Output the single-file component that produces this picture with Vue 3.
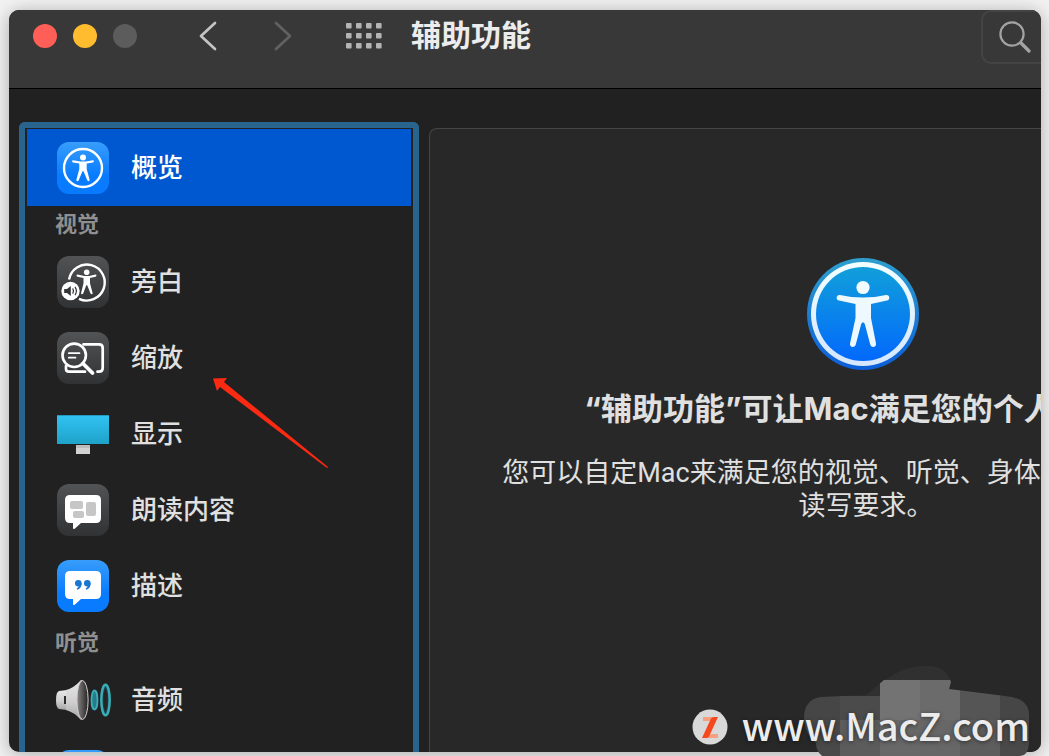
<script setup>
import { ref } from 'vue'

const current = ref('overview')

const groups = [
  { title: '', items: [{ id: 'overview', label: '概览' }] },
  {
    title: '视觉',
    items: [
      { id: 'voiceover', label: '旁白' },
      { id: 'zoom', label: '缩放' },
      { id: 'display', label: '显示' },
      { id: 'spoken', label: '朗读内容' },
      { id: 'descriptions', label: '描述' },
    ],
  },
  {
    title: '听觉',
    items: [
      { id: 'audio', label: '音频' },
      { id: 'next', label: '' },
    ],
  },
]

const dots = Array.from({ length: 12 }, (_, i) => ({ x: (i % 4) * 10, y: Math.floor(i / 4) * 10 }))

const mosaic = [
  { x: 0, y: 0, w: 226, h: 32, fill: '#303030' },
  { x: 0, y: 32, w: 36, h: 24, fill: '#464646' },
  { x: 36, y: 32, w: 40, h: 24, fill: '#4b4b4b' },
  { x: 76, y: 16, w: 40, h: 40, fill: '#737373' },
  { x: 116, y: 16, w: 40, h: 40, fill: '#6b6b6b' },
  { x: 156, y: 16, w: 40, h: 40, fill: '#555555' },
  { x: 196, y: 16, w: 30, h: 40, fill: '#464646' },
  { x: 0, y: 56, w: 36, h: 36, fill: '#494949' },
  { x: 36, y: 56, w: 40, h: 36, fill: '#5c5c5c' },
  { x: 76, y: 56, w: 40, h: 36, fill: '#686868' },
  { x: 116, y: 56, w: 40, h: 36, fill: '#676767' },
  { x: 156, y: 56, w: 40, h: 36, fill: '#5d5d5d' },
  { x: 196, y: 56, w: 30, h: 36, fill: '#494949' },
]
</script>

<template>
  <div class="desktop">
    <div class="window">
      <header class="titlebar">
        <div class="lights">
          <button class="light close" aria-label="关闭"></button>
          <button class="light minimize" aria-label="最小化"></button>
          <button class="light full" aria-label="缩放窗口" disabled></button>
        </div>
        <button class="tool back" aria-label="后退">
          <svg width="18" height="30" viewBox="0 0 18 30"><path d="M16 2 2 15 16 28" fill="none" stroke="#c4c4c4" stroke-width="2.7" stroke-linecap="round" stroke-linejoin="round" /></svg>
        </button>
        <button class="tool forward" aria-label="前进" disabled>
          <svg width="18" height="30" viewBox="0 0 18 30"><path d="M2 2 16 15 2 28" fill="none" stroke="#616161" stroke-width="2.7" stroke-linecap="round" stroke-linejoin="round" /></svg>
        </button>
        <button class="tool grid" aria-label="显示全部">
          <svg width="36" height="26" viewBox="0 0 36 26"><rect v-for="(d, i) in dots" :key="i" :x="d.x" :y="d.y" width="5.6" height="5.4" rx="1" fill="#b4b4b4" /></svg>
        </button>
        <h1 class="title">辅助功能</h1>
        <div class="search-slot">
          <label class="search">
            <svg width="34" height="34" viewBox="0 0 34 34"><circle cx="14" cy="14" r="11.6" fill="none" stroke="#a3a3a3" stroke-width="2.2" /><path d="m23 23 8 8" stroke="#a3a3a3" stroke-width="3.4" stroke-linecap="round" /></svg>
            <input type="search" aria-label="搜索" />
          </label>
        </div>
      </header>

      <div class="body">
        <nav class="sidebar">
          <section v-for="g in groups" :key="g.title" class="group">
            <h2 v-if="g.title" class="group-title">{{ g.title }}</h2>
            <button v-for="item in g.items" :key="item.id" class="row" :class="{ active: current === item.id }" @click="current = item.id">
              <svg class="icon" width="60" height="56" viewBox="-2 -2 60 56" aria-hidden="true">
                <defs>
                  <linearGradient :id="'blue-' + item.id" x1="0" y1="0" x2="0" y2="1"><stop offset="0" stop-color="#389dfb" /><stop offset=".65" stop-color="#087cff" /><stop offset="1" stop-color="#087aff" /></linearGradient>
                  <linearGradient :id="'gray-' + item.id" x1="0" y1="0" x2="0" y2="1"><stop offset="0" stop-color="#525355" /><stop offset="1" stop-color="#313234" /></linearGradient>
                </defs>
                <g v-if="item.id === 'overview'">
                  <rect width="52" height="52" rx="12" fill="url(#blue-overview)" />
                  <circle cx="26" cy="26" r="19" fill="none" stroke="#fff" stroke-width="2.4" />
                  <circle cx="26" cy="15.5" r="3" fill="#fff" />
                  <path d="M16 18.2 23.5 19.6H28.5L36 18.2C37.2 18.2 37.2 20.2 36 20.4L29.7 21.6V27L32.6 37.8C32.8 39.3 31 39.6 30.4 38.4L26.5 29.2H25.5L21.6 38.4C21 39.6 19.2 39.3 19.4 37.8L22.3 27V21.6L16 20.4C14.8 20.2 14.8 18.2 16 18.2Z" fill="#fff" />
                </g>
                <g v-else-if="item.id === 'voiceover'">
                  <rect width="52" height="52" rx="12" fill="url(#gray-voiceover)" />
                  <path d="M12 23.5A18 18 0 1 1 22 42.8" fill="none" stroke="#fff" stroke-width="2.4" />
                  <circle cx="29.7" cy="16.2" r="2.8" fill="#fff" />
                  <path d="M20.5 18.6 27.5 20H32L38.5 18.6C39.8 18.6 39.8 20.6 38.5 20.8L33 22V27.3L35.6 37C35.7 38.5 34.1 38.7 33.5 37.6L30.2 29.3H29.3L26.2 37.6C25.5 38.8 23.9 38.4 24.1 37L26.5 27.3V22L20.5 20.8C19.2 20.6 19.2 18.6 20.5 18.6Z" fill="#fff" />
                  <circle cx="13.5" cy="35" r="9.2" fill="#fff" />
                  <path d="M7.2 33H10L13.8 30V40L10 37H7.2Z" fill="#343537" />
                  <path d="M15.7 32.4Q17.3 35 15.7 37.6M18 30.8Q20.8 35 18 39.2" fill="none" stroke="#343537" stroke-width="1.2" />
                </g>
                <g v-else-if="item.id === 'zoom'">
                  <rect width="52" height="52" rx="12" fill="url(#gray-zoom)" />
                  <g fill="none" stroke="#fff" stroke-linecap="round">
                    <path d="M26.5 12.3H42Q45.7 12.3 45.7 16V36Q45.7 39.7 42 39.7H40.5M9 34V37Q9 39.7 12 39.7H28" stroke-width="2.7" />
                    <circle cx="17.2" cy="23.3" r="11.7" stroke-width="2.6" />
                    <path d="m26 31.5 9.5 9.5" stroke-width="3.8" />
                    <path d="M11.8 21.2H22.5M11.8 25.7H18.5" stroke-width="1.7" />
                  </g>
                </g>
                <g v-else-if="item.id === 'display'">
                  <linearGradient id="screen" x1="0" y1="0" x2="0" y2="1"><stop offset="0" stop-color="#32c3f4" /><stop offset="1" stop-color="#1ea2c8" /></linearGradient>
                  <rect y="7" width="52" height="29" fill="url(#screen)" />
                  <rect y="7" width="52" height="1" fill="#2598bd" />
                  <rect x="19" y="37" width="14" height="9" fill="#d2d2d2" />
                  <rect x="19" y="37" width="14" height="3" fill="#bcbcbc" />
                </g>
                <g v-else-if="item.id === 'spoken'">
                  <rect width="52" height="52" rx="12" fill="url(#gray-spoken)" />
                  <path d="M13 11H39Q44 11 44 16V34Q44 39 39 39H24L18 44.5Q16 46 16 43.5V39H13Q8 39 8 34V16Q8 11 13 11Z" fill="#fff" />
                  <rect x="13" y="17" width="13" height="8" rx="2" fill="#c6c6c6" />
                  <rect x="29" y="18" width="10" height="14" rx="2" fill="#c6c6c6" />
                  <rect x="16" y="27" width="11" height="7" rx="2" fill="#c6c6c6" />
                </g>
                <g v-else-if="item.id === 'descriptions'">
                  <rect width="52" height="52" rx="12" fill="url(#blue-descriptions)" />
                  <path d="M13 11H39Q44 11 44 16V34Q44 39 39 39H24L18 44.5Q16 46 16 43.5V39H13Q8 39 8 34V16Q8 11 13 11Z" fill="#fff" />
                  <g fill="#1877d2"><circle cx="21.3" cy="23.3" r="3.3" /><path d="M24.6 23Q25 28 20.3 29.8L19.6 28.7Q22 27.3 22 25Z" /><circle cx="30.3" cy="23.3" r="3.3" /><path d="M33.6 23Q34 28 29.3 29.8L28.6 28.7Q31 27.3 31 25Z" /></g>
                </g>
                <g v-else-if="item.id === 'audio'">
                  <linearGradient id="horn" x1="0" y1="0" x2="0" y2="1"><stop offset="0" stop-color="#e8e8e8" /><stop offset=".55" stop-color="#cfcfcf" /><stop offset="1" stop-color="#a5a5a5" /></linearGradient>
                  <linearGradient id="cone" x1="0" y1="0" x2="1" y2="0"><stop offset="0" stop-color="#8a8787" /><stop offset="1" stop-color="#242222" /></linearGradient>
                  <path d="M2 17Q-1 18-1 26T2 35L10 36V16Z" fill="url(#horn)" />
                  <path d="M7 22H11V30H7Z" fill="#2c2c2c" />
                  <path d="M9 16Q17 14 24 6Q30 7 30 26T24 46Q17 38 9 36Z" fill="url(#horn)" />
                  <ellipse cx="25.5" cy="26" rx="5.6" ry="19.5" fill="url(#cone)" stroke="#d8cfcf" stroke-width="1" />
                  <ellipse cx="37.5" cy="26" rx="3" ry="9.5" fill="#247c89" stroke="#3badb9" stroke-width="1.8" />
                  <ellipse cx="48.5" cy="26" rx="4.2" ry="15.3" fill="#17454c" stroke="#3badb9" stroke-width="2.5" />
                  <ellipse cx="48.5" cy="26" rx="2" ry="11" fill="#252525" />
                </g>
                <rect v-else width="52" height="52" rx="12" fill="url(#blue-next)" />
              </svg>
              <span class="label">{{ item.label }}</span>
            </button>
          </section>
        </nav>

        <main class="panel">
          <svg class="hero" width="112" height="112" viewBox="0 0 112 112" aria-hidden="true">
            <defs>
              <linearGradient id="rim" x1="0" y1="0" x2="0" y2="1"><stop offset="0" stop-color="#2d9fce" /><stop offset="1" stop-color="#0c5ed8" /></linearGradient>
              <linearGradient id="disc" x1="0" y1="0" x2="0" y2="1"><stop offset="0" stop-color="#119fda" /><stop offset="1" stop-color="#0269fc" /></linearGradient>
              <linearGradient id="ring" x1="0" y1="0" x2="0" y2="1"><stop offset="0" stop-color="#f3ffff" /><stop offset="1" stop-color="#d5e6ff" /></linearGradient>
            </defs>
            <circle cx="56" cy="56" r="56" fill="url(#rim)" />
            <circle cx="56" cy="56" r="52" fill="url(#ring)" />
            <circle cx="56" cy="56" r="47" fill="url(#disc)" />
            <circle cx="56" cy="29.5" r="6.6" fill="#f2fbff" />
            <path d="M33 37Q44 39.5 56 39.5T79 37C83 36.5 83.4 41.8 80 42.6L64 46V60L69 85.5C69.6 89.5 64.6 90.2 63.3 86.8L57.8 66Q56 62.5 54.2 66L48.7 86.8C47.4 90.2 42.4 89.5 43 85.5L48.5 60V46L32 42.6C28.6 41.8 29 36.5 33 37Z" fill="#eef8ff" />
          </svg>
          <div class="intro">
            <h2 class="headline">“辅助功能”可让Mac满足您的个人需求。</h2>
            <p class="copy">您可以自定Mac来满足您的视觉、听觉、身体活动、学习以及<br />读写要求。</p>
          </div>
        </main>
      </div>
    </div>

    <svg class="arrow" width="116" height="92" viewBox="0 0 116 92" aria-hidden="true"><path d="M1 1.5 15 1 12 5 116 90 115 91 8 10 5 14Z" fill="#fb2a12" /></svg>

    <div class="watermark">
      <svg class="mosaic" width="226" height="92" viewBox="0 0 226 92" aria-hidden="true">
        <clipPath id="blob"><path d="M0 52Q1 36 16 33L62 31 80 16 96 7Q108 2 122 2 142 1 147 18L145 25 201 32Q225 34 225 51V80Q224 92 216 92H18Q12 87 12 79 0 70 0 52Z" /></clipPath>
        <g clip-path="url(#blob)" shape-rendering="crispEdges"><rect v-for="(m, i) in mosaic" :key="i" :x="m.x" :y="m.y" :width="m.w" :height="m.h" :fill="m.fill" /></g>
      </svg>
      <div class="brand">
        <svg width="36" height="36" viewBox="0 0 36 36" aria-hidden="true"><circle cx="18" cy="18" r="17.5" fill="#d9d9d9" /><path d="M11 8H24V12H11ZM12 25H26V29H12Z" fill="#f6a083" /><path d="M19 9.5Q20 8 22 8H26L17 27.5Q16 29 14 29H10Z" fill="#f5491d" /></svg>
        <span class="site">www.MacZ.com</span>
      </div>
    </div>
  </div>
</template>

<style>
html,
body {
  margin: 0;
  overflow: hidden;
}
</style>

<style scoped>
.desktop {
  position: relative;
  box-sizing: border-box;
  height: 100vh;
  padding: 10px 8px 4px 9px;
  overflow: hidden;
  background: #f2f2f2;
  font-family: Roboto, "Noto Sans CJK SC", sans-serif;
  color: #e0e0e0;
}
.window {
  display: flex;
  flex-direction: column;
  height: 100%;
  overflow: hidden;
  border-radius: 10px;
  background: #212121;
  box-shadow: 0 2px 18px rgba(0, 0, 0, 0.3);
}
button {
  padding: 0;
  border: 0;
  background: none;
  color: inherit;
  font: inherit;
}
svg {
  display: block;
  flex: none;
}
.titlebar {
  display: flex;
  flex: none;
  align-items: center;
  height: 52px;
  padding: 0 0 26px 24px;
  border-bottom: 1px solid #000;
  background: #383838;
}
.lights {
  display: flex;
  gap: 16px;
}
.light {
  width: 24px;
  height: 24px;
  border-radius: 50%;
}
.close {
  background: #ff5f57;
}
.minimize {
  background: #febc2e;
}
.full {
  background: #5c5c5c;
}
.back {
  margin-left: 62px;
}
.forward {
  margin-left: 57px;
}
.grid {
  margin-left: 54px;
}
.title {
  margin: 0 0 0 29px;
  font-size: 30px;
  line-height: 40px;
  font-weight: 700;
  color: #ececec;
}
.search-slot {
  flex: 0 0 60px;
  min-width: 0;
  align-self: flex-start;
  margin-left: auto;
}
.search {
  display: flex;
  align-items: center;
  box-sizing: border-box;
  width: 300px;
  height: 54px;
  padding-left: 15px;
  border: 2px solid #444;
  border-radius: 10px;
}
.search input {
  flex: 1;
  min-width: 0;
  border: 0;
  background: none;
}
.body {
  display: flex;
  flex: 1;
  gap: 10px;
  min-height: 0;
  padding: 33px 0 0 10px;
}
.sidebar {
  box-sizing: border-box;
  flex: 0 0 400px;
  padding: 1px 2px;
  border: 6px solid #29648f;
  border-bottom: 0;
  border-radius: 6px 6px 0 0;
  overflow: hidden;
}
.group-title {
  margin: 0;
  padding-left: 28px;
  font-size: 22px;
  line-height: 38px;
  font-weight: 700;
  color: #8f8f8f;
}
.row {
  display: flex;
  align-items: center;
  gap: 16px;
  width: 100%;
  height: 76px;
  padding-left: 28px;
  font-size: 26px;
  font-weight: 500;
  text-align: left;
}
.row.active {
  height: 77px;
  background: #0058d0;
  color: #fff;
}
.label {
  line-height: 36px;
}
.panel {
  box-sizing: border-box;
  flex: 0 0 868px;
  margin-top: 6px;
  padding-top: 129px;
  border: 1px solid #454545;
  border-bottom: 0;
  border-radius: 8px 0 0 0;
  background: #282828;
  text-align: center;
  white-space: nowrap;
}
.hero {
  margin: 0 auto;
}
.intro {
  padding: 18px 0 0 6px;
}
.headline {
  margin: 0;
  font-family: Inter, "Noto Sans CJK SC", sans-serif;
  font-size: 31px;
  line-height: 42px;
  font-weight: 700;
}
.copy {
  margin: 27px 0 0;
  font-size: 27px;
  line-height: 33px;
}
.arrow {
  position: absolute;
  left: 212px;
  top: 377px;
}
.watermark {
  position: absolute;
  right: 19px;
  bottom: 0;
}
.mosaic {
  margin-left: auto;
}
.brand {
  position: absolute;
  right: 0;
  bottom: 0;
  display: flex;
  align-items: center;
  gap: 14px;
  font-family: "Noto Sans CJK SC", sans-serif;
  font-size: 38px;
  line-height: 54px;
  font-weight: 500;
  color: #ececec;
  text-shadow: 0 1px 4px rgba(0, 0, 0, 0.5);
}
.site {
  padding-bottom: 4px;
}
</style>
